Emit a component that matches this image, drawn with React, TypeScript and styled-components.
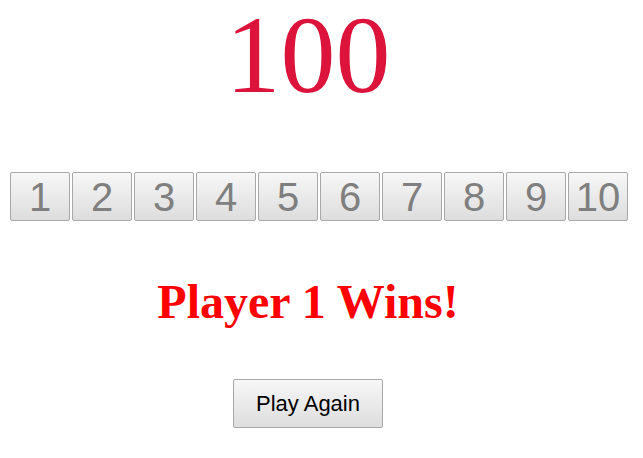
import React from "react";
import styled, { createGlobalStyle } from "styled-components";

const GlobalStyle = createGlobalStyle`
  html, body {
    margin: 0;
    padding: 0;
    background: #ffffff;
  }
`;

const Page = styled.div`
  width: 600px;
  margin-left: 8px;
  display: flex;
  flex-direction: column;
  align-items: center;
`;

const Score = styled.div`
  font-family: "Liberation Serif", "Times New Roman", serif;
  font-size: 110px;
  line-height: 110px;
  height: 110px;
  color: #dc143c;
`;

const NumberRow = styled.div`
  align-self: flex-start;
  display: flex;
  gap: 2px;
  margin: 62px 0 0 2px;
`;

const GameButton = styled.button<{ $wide?: boolean }>`
  box-sizing: border-box;
  width: ${(p) => (p.$wide ? "150px" : "60px")};
  height: 49px;
  padding: 0;
  border: 1px solid #a8a8a8;
  border-radius: 2px;
  background: linear-gradient(#f7f7f7, #dddddd);
  font-family: "Liberation Sans", Arial, sans-serif;
  font-size: ${(p) => (p.$wide ? "22px" : "40px")};
  line-height: 1;
  color: ${(p) => (p.$wide ? "#000000" : "#7f7f7f")};
  display: flex;
  align-items: center;
  justify-content: center;
  flex-shrink: 0;
`;

const Result = styled.div`
  margin-top: 57px;
  font-family: "Liberation Serif", "Times New Roman", serif;
  font-weight: bold;
  font-size: 48px;
  line-height: 48px;
  color: #ff0000;
`;

const AgainWrap = styled.div`
  margin-top: 53px;
`;

export default function App() {
  const nums = Array.from({ length: 10 }, (_, i) => i + 1);
  return (
    <>
      <GlobalStyle />
      <Page>
        <Score>100</Score>
        <NumberRow>
          {nums.map((n) => (
            <GameButton key={n}>{n}</GameButton>
          ))}
        </NumberRow>
        <Result>Player 1 Wins!</Result>
        <AgainWrap>
          <GameButton $wide>Play Again</GameButton>
        </AgainWrap>
      </Page>
    </>
  );
}
